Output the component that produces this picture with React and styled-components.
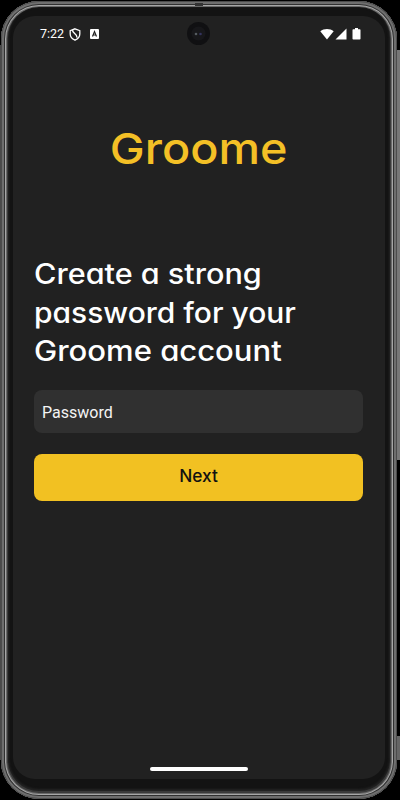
import React from "react";
import styled, { createGlobalStyle } from "styled-components";

const Global = createGlobalStyle`
  * { box-sizing: border-box; }
  html, body { margin: 0; background: #000; overflow: hidden; }
`;

const Stage = styled.div`
  width: 400px;
  height: 800px;
  padding: 1px 3px 1px 1px;
  background:
    linear-gradient(#777, #777) 397px 50px / 3px 410px no-repeat,
    linear-gradient(#666, #666) 397px 736px / 3px 24px no-repeat,
    linear-gradient(#4a4a4a, #4a4a4a) 0 45px / 2px 715px no-repeat,
    #000;
`;

const Phone = styled.main`
  position: relative;
  height: 798px;
  border-radius: 38px;
  padding: 15px 12px 20px 12px;
  background: #131313;
  box-shadow:
    inset 0 0 0 1px #4c4c4c,
    inset 0 0 0 3px #6e6e6e,
    inset 0 0 0 4px #303030,
    inset 0 0 0 5px #a6a6a6,
    inset 0 0 0 6px #696969,
    inset 0 -1px 0 7px #3a3a3a,
    inset 0 -2px 2px 8px #222;
`;

const Screen = styled.div`
  height: 100%;
  display: flex;
  flex-direction: column;
  padding: 0 22px 0 21px;
  border-radius: 22px;
  background: #212121;
  font-family: Inter, "Liberation Sans", sans-serif;
  font-feature-settings: "cv11" 1;
`;

const StatusBar = styled.header`
  height: 36px;
  display: flex;
  align-items: center;
  padding: 0 2px 0 6px;
  color: #fff;
`;

const Clock = styled.time`
  width: 28px;
  font: 12.5px/16px Roboto, sans-serif;
`;

const Icon = styled.svg`
  display: block;
  flex: none;
  margin-left: ${(p) => p.$gap || 0}px;
`;

const Spacer = styled.span`
  flex: 1;
`;

const Camera = styled.svg`
  position: absolute;
  left: 185px;
  top: 20px;
`;

const SpeakerSlot = styled.span`
  position: absolute;
  left: 194px;
  top: 2px;
  width: 8px;
  height: 3px;
  background: #333;
`;

const Fit = styled.span`
  display: block;
  width: max-content;
  white-space: nowrap;
  transform: scaleX(${(p) => p.$scale || 1});
  transform-origin: ${(p) => p.$origin || "left"};
`;

const Brand = styled.div`
  height: 60px;
  margin-top: 66px;
  display: flex;
  justify-content: center;
  padding-left: 1px;
  color: #f4c026;
  font-size: 43px;
  font-weight: 500;
  line-height: 60px;
`;

const Heading = styled.h1`
  margin: 77px 0 0;
  color: #fff;
  font-size: 28px;
  font-weight: 500;
  line-height: 38.5px;
`;

const Field = styled.div`
  height: 43px;
  margin-top: 19.5px;
  padding: 0 8px;
  border-radius: 8px;
  background: #303030;
  color: #f4f4f4;
  font: 16px/45px Roboto, sans-serif;
`;

const NextButton = styled.button`
  height: 47px;
  margin-top: 21px;
  padding: 0 0 3px;
  border: 0;
  border-radius: 8px;
  background: #f2c122;
  color: #111;
  display: flex;
  align-items: center;
  justify-content: center;
  font: 500 17.3px/24px Inter, sans-serif;
`;

const HomeBar = styled.div`
  width: 98px;
  height: 4px;
  margin: auto auto 8px;
  border-radius: 2px;
  background: #fff;
`;

export default function App() {
  return (
    <Stage>
      <Global />
      <Phone>
        <SpeakerSlot />
        <Screen>
          <StatusBar>
            <Clock>7:22</Clock>
            <Icon $gap={1} width="12" height="13" viewBox="0 0 12 13" fill="none" stroke="#fff" strokeWidth="1.3">
              <path d="M6 .8 10.8 2.6V6c0 3-1.8 5-4.8 6.2C3 11 1.2 9 1.2 6V2.6Z" />
              <path d="M3.6 2.2c-.4 3.4 4.8 3.3 4.4 7.4" strokeWidth="1.5" />
            </Icon>
            <Icon $gap={9} width="9" height="10" viewBox="0 0 9 10">
              <rect width="9" height="10" rx="1" fill="#fff" />
              <path d="m2.5 7.5 2-5 2 5M3.2 6h2.6" fill="none" stroke="#222" strokeWidth="1.2" />
            </Icon>
            <Spacer />
            <Icon width="14" height="12" viewBox="0 0 14 12">
              <path d="M.3 3.2C4 .1 10 .1 13.7 3.2L7 11.5Z" fill="#fff" />
            </Icon>
            <Icon $gap={1} width="12" height="12" viewBox="0 0 12 12">
              <path d="M.5 11.5 11.5.5v11Z" fill="#fff" />
            </Icon>
            <Icon $gap={5} width="9" height="12" viewBox="0 0 9 12">
              <path d="M3 0h3v1.2h1.7q.8 0 .8.8v8.8q0 .8-.8.8H1.3q-.8 0-.8-.8V2q0-.8.8-.8H3Z" fill="#fff" />
            </Icon>
          </StatusBar>
          <Brand><Fit $origin="center" $scale={1.088}>Groome</Fit></Brand>
          <Heading>
            <Fit $scale={1.092}>Create a strong</Fit>
            <Fit $scale={1.07}>password for your</Fit>
            <Fit $scale={1.108}>Groome account</Fit>
          </Heading>
          <Field>Password</Field>
          <NextButton>Next</NextButton>
          <HomeBar />
        </Screen>
        <Camera width="25" height="25" viewBox="0 0 25 25">
          <circle cx="12.5" cy="12.5" r="11.5" fill="#101012" />
          <circle cx="12.5" cy="12.5" r="7" fill="#17171a" />
          <circle cx="10" cy="13" r="1.3" fill="#555b60" />
          <circle cx="14.5" cy="13" r="1.3" fill="#34345e" />
        </Camera>
      </Phone>
    </Stage>
  );
}
